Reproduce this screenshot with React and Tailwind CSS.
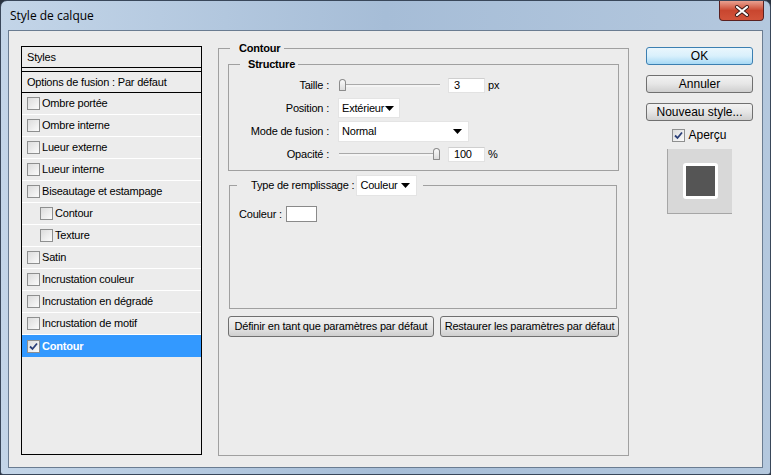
import React from "react"

const styleRows = [
  { label: "Ombre portée" },
  { label: "Ombre interne" },
  { label: "Lueur externe" },
  { label: "Lueur interne" },
  { label: "Biseautage et estampage" },
  { label: "Contour", sub: true },
  { label: "Texture", sub: true },
  { label: "Satin" },
  { label: "Incrustation couleur" },
  { label: "Incrustation en dégradé" },
  { label: "Incrustation de motif" },
  { label: "Contour", active: true },
]

const Check = ({ checked }) => (
  <span className="w-[13px] h-[13px] shrink-0 border border-[#8e8f8f] bg-gradient-to-br from-[#dcdcdc] to-[#fbfbfb] p-[1px] flex items-center justify-center">
    {checked && (
      <svg width="9" height="9" viewBox="0 0 9 9">
        <path d="M1 4.5 L3.5 7 L8 1.5" fill="none" stroke="#2b3f78" strokeWidth="1.8" />
      </svg>
    )}
  </span>
)

const Arrow = () => (
  <svg width="9" height="5" viewBox="0 0 9 5" className="shrink-0">
    <path d="M0 0 H9 L4.5 5 Z" fill="#000" />
  </svg>
)

const Slider = ({ at }) => (
  <div className="w-[101px] h-[13px] flex items-center">
    {at === "end" && <div className="flex-1 h-[3px] border-t border-[#a9a9a9] bg-[#f4f4f4]" />}
    <div className="w-[7px] h-[12px] rounded-t-[4px] rounded-b-[1px] border border-[#8c8c8c] bg-gradient-to-b from-[#fafafa] to-[#dcdcdc]" />
    {at === "start" && <div className="flex-1 h-[3px] border-t border-[#a9a9a9] bg-[#f4f4f4]" />}
  </div>
)

const WinButton = ({ children, focused, className = "" }) => (
  <button
    className={
      focused
        ? "h-[18px] whitespace-nowrap rounded-[3px] border border-[#3c7fb1] bg-gradient-to-b from-[#eaf6fd] via-[#d9f0fc] to-[#a7d9f5] text-black leading-none " + className
        : "h-[18px] whitespace-nowrap rounded-[3px] border border-[#707070] bg-gradient-to-b from-[#f2f2f2] via-[#e6e6e6] to-[#cfcfcf] text-black leading-none " + className
    }
  >
    {children}
  </button>
)

export default function App() {
  return (
    <div className="w-[771px] h-[475px] bg-[#2a3340] font-['Liberation_Sans',Arial,sans-serif] text-black">
      <div className="w-full h-full flex flex-col rounded-t-[7px] rounded-b-[3px] border border-[#39475a] bg-gradient-to-r from-[#c3d5e8] via-[#a6bdd7] to-[#b4c8de]">
        {/* title bar */}
        <div className="h-[29px] flex items-start justify-between">
          <div className="pl-[9px] pt-[6px] text-[12px] text-black font-['Open_Sans','Liberation_Sans',sans-serif]">Style de calque</div>
          <div className="mr-[6px] w-[45px] h-[20px] rounded-b-[4px] border border-t-0 border-[#5a2020] bg-gradient-to-b from-[#e8a090] via-[#c9462f] to-[#d2533a] flex items-center justify-center">
            <svg width="16" height="12" viewBox="0 0 16 12">
              <path d="M3 2 L13 10 M13 2 L3 10" stroke="#3a1a18" strokeWidth="4" strokeLinecap="round" />
              <path d="M3 2 L13 10 M13 2 L3 10" stroke="#fff" strokeWidth="2.2" strokeLinecap="round" />
            </svg>
          </div>
        </div>

        {/* client area */}
        <div className="flex-1 mx-[7px] mb-[6px] border border-[#6a7c91] bg-[#ececec] flex items-start pt-[10px] pl-[12px] text-[11px] leading-[13px] tracking-[-0.2px]">
          {/* styles list */}
          <div className="mt-[5px] w-[181px] h-[409px] border border-black flex flex-col">
            <div className="h-[21px] border-b border-black flex items-center pl-[5px]">Styles</div>
            <div className="mt-[3px] h-[22px] border-y border-black flex items-center pl-[5px]">Options de fusion : Par défaut</div>
            {styleRows.map((r, i) => (
              <div
                key={i}
                className={
                  r.active
                    ? "h-[22px] flex items-center pl-[5px] bg-[#3399ff] text-white font-bold"
                    : "h-[22px] flex items-center pl-[5px] border-b border-white"
                }
              >
                <span className={r.sub ? "ml-[13px] flex" : "flex"}>
                  <Check checked={r.active} />
                </span>
                <span className="ml-[2px]">{r.label}</span>
              </div>
            ))}
          </div>

          {/* contour group */}
          <fieldset className="ml-[16px] mt-[1px] w-[411px] h-[414px] border border-[#a0a0a0] px-[9px]">
            <legend className="ml-[2px] pl-[9px] pr-[4px] font-bold">Contour</legend>

            <fieldset className="mt-[3px] border border-[#a0a0a0] pb-[5px]">
              <legend className="ml-[11px] pl-[8px] pr-[3px] font-bold">Structure</legend>
              <div className="pt-[3px]">
                <div className="h-[22px] flex items-center">
                  <span className="w-[104px] text-right pr-[4px]">Taille :</span>
                  <span className="ml-[6px]"><Slider at="start" /></span>
                  <span className="ml-[8px] w-[37px] h-[15px] bg-white border border-[#e2e2e2] border-t-[#cfcfcf] flex items-center pl-[5px]">3</span>
                  <span className="ml-[3px]">px</span>
                </div>
                <div className="h-[24px] flex items-center">
                  <span className="w-[104px] text-right pr-[4px]">Position :</span>
                  <span className="ml-[5px] w-[62px] h-[20px] bg-white border border-[#e4e4e4] flex items-center justify-between pl-[3px] pr-[5px]">
                    Extérieur <Arrow />
                  </span>
                </div>
                <div className="h-[23px] flex items-center">
                  <span className="w-[104px] text-right pr-[4px]">Mode de fusion :</span>
                  <span className="ml-[5px] w-[131px] h-[21px] bg-white border border-[#e4e4e4] flex items-center justify-between pl-[3px] pr-[6px]">
                    Normal <Arrow />
                  </span>
                </div>
                <div className="h-[22px] flex items-center">
                  <span className="w-[104px] text-right pr-[4px]">Opacité :</span>
                  <span className="ml-[6px]"><Slider at="end" /></span>
                  <span className="ml-[8px] w-[37px] h-[15px] bg-white border border-[#e2e2e2] border-t-[#cfcfcf] flex items-center pl-[5px]">100</span>
                  <span className="ml-[3px]">%</span>
                </div>
              </div>
            </fieldset>

            <fieldset className="mt-[4px] ml-[1px] w-[388px] h-[134px] border border-[#a0a0a0]">
              <legend className="ml-[7px] pl-[14px] pr-[6px] flex items-center">
                <span>Type de remplissage :</span>
                <span className="ml-[2px] w-[61px] h-[21px] bg-white border border-[#e4e4e4] flex items-center justify-between pl-[3px] pr-[6px]">
                  Couleur <Arrow />
                </span>
              </legend>
              <div className="mt-[10px] ml-[9px] flex items-center">
                <span>Couleur :</span>
                <span className="ml-[4px] w-[31px] h-[16px] bg-white border border-[#8a8a8a]" />
              </div>
            </fieldset>

            <div className="mt-[7px] flex gap-[6px]">
              <WinButton className="w-[206px] h-[21px] text-[11px]">Définir en tant que paramètres par défaut</WinButton>
              <WinButton className="w-[179px] h-[21px] text-[11px]">Restaurer les paramètres par défaut</WinButton>
            </div>
          </fieldset>

          {/* right column */}
          <div className="ml-[17px] mt-[6px] w-[107px] flex flex-col items-center tracking-normal">
            <WinButton focused className="w-[107px] text-[12px]">OK</WinButton>
            <WinButton className="w-[107px] mt-[10px] text-[12px]">Annuler</WinButton>
            <WinButton className="w-[107px] mt-[10px] text-[12px]">Nouveau style...</WinButton>
            <div className="mt-[6px] h-[16px] flex items-center gap-[3px] text-[12px]">
              <Check checked />
              <span>Aperçu</span>
            </div>
            <div className="mt-[6px] w-[65px] h-[65px] bg-[#d8d8d8] border-l border-b border-[#a6a6a6] flex items-center justify-center">
              <div className="w-[35px] h-[36px] rounded-[3px] border-[3px] border-white bg-[#555555]" />
            </div>
          </div>
        </div>
      </div>
    </div>
  )
}
